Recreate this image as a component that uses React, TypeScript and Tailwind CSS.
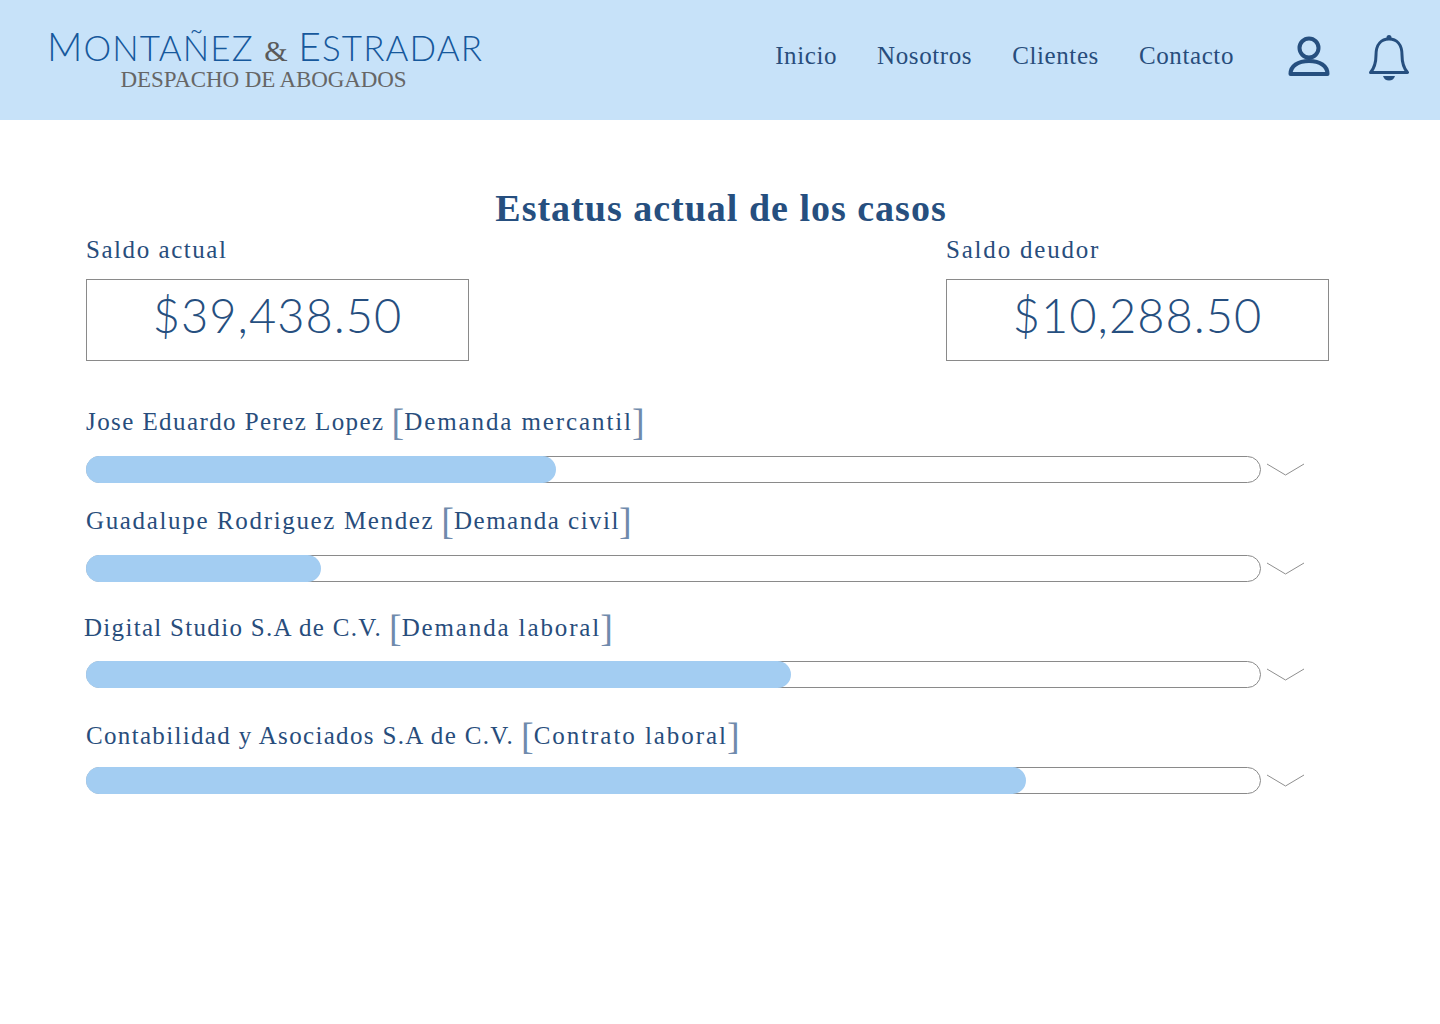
const serif = "font-['Liberation_Serif',serif]";
const rows = [
  { name: "Jose Eduardo Perez Lopez", kind: "Demanda mercantil", pct: 470, top: "mt-[43px]", gap: "mt-[16px]", ml: "", nameT: "tracking-[1.42px]", kindT: "tracking-[1.9px]" },
  { name: "Guadalupe Rodriguez Mendez", kind: "Demanda civil", pct: 235, top: "mt-[20px]", gap: "mt-[16px]", ml: "", nameT: "tracking-[1.65px]", kindT: "tracking-[1.5px]" },
  { name: "Digital Studio S.A de C.V.", kind: "Demanda laboral", pct: 705, top: "mt-[28px]", gap: "mt-[15px]", ml: "-ml-[2px]", nameT: "tracking-[1.3px]", kindT: "tracking-[1.87px]" },
  { name: "Contabilidad y Asociados S.A de C.V.", kind: "Contrato laboral", pct: 940, top: "mt-[30px]", gap: "mt-[13px]", ml: "", nameT: "tracking-[1.33px]", kindT: "tracking-[1.95px]" },
];
const saldos = [
  { label: "Saldo actual", value: "$39,438.50", t: "tracking-[1.55px]" },
  { label: "Saldo deudor", value: "$10,288.50", t: "tracking-[1.8px]" },
];

function Row({ r }: { r: (typeof rows)[number] }) {
  return (
    <div className={r.top}>
      <div className={`flex items-center h-[36px] text-[25px] text-[#284d7c] whitespace-nowrap ${r.ml}`}>
        <span className={r.nameT}>{r.name}</span>
        <span className="ml-[7px] text-[38px] leading-none text-[#6f8aac] -mt-[1px]">[</span>
        <span className={r.kindT}>{r.kind}</span>
        <span className="-ml-[1px] text-[38px] leading-none text-[#6f8aac] -mt-[1px]">]</span>
      </div>
      <div className={`flex items-center ${r.gap}`}>
        <div className="w-[1175px] h-[27px] rounded-full border border-[#8a8a8a] bg-white">
          <div className="h-[27px] -mt-px -ml-px rounded-full bg-[#a3cdf2]" style={{ width: r.pct }} />
        </div>
        <svg className="ml-[5px]" width="39" height="16" viewBox="0 0 39 16" fill="none">
          <path d="M1 2 L19.5 13 L38 2" stroke="#8f8f8f" strokeWidth="1" />
        </svg>
      </div>
    </div>
  );
}

export default function App() {
  return (
    <div className={`min-h-[1024px] bg-white ${serif}`}>
      <header className="h-[120px] bg-[#c7e2f9] flex items-center pl-[47px] pr-[30px]">
        <div className="w-[436px] -mt-[2px] flex flex-col items-center">
          <div className="font-['Lato',sans-serif] font-light text-[#16589c] text-[35px] leading-[40px] tracking-[1.1px] whitespace-nowrap">
            <span className="text-[39px]">M</span>ONTAÑEZ{" "}
            <span className={`${serif} text-[#5a5a5a] text-[30px] tracking-normal`}>&amp;</span>{" "}
            <span className="text-[39px]">E</span>STRADAR
          </div>
          <div className="text-[#666666] text-[23px] leading-[24px] -mt-[3px] -ml-[3px] tracking-[-0.1px] whitespace-nowrap">DESPACHO DE ABOGADOS</div>
        </div>
        <nav className="ml-auto flex items-center gap-[40px] text-[25px] tracking-[0.6px] text-[#284d7c] -mt-[8px] mr-[54px]">
          <span>Inicio</span>
          <span>Nosotros</span>
          <span>Clientes</span>
          <span>Contacto</span>
        </nav>
        <svg className="-mt-[7px]" width="42" height="44" viewBox="0 0 42 44" fill="none" stroke="#264f7f" strokeWidth="4">
          <circle cx="21" cy="13" r="9.5" />
          <path d="M2.5 39 C2.5 31 10 26 21 26 C32 26 39.5 31 39.5 39 Z" strokeLinejoin="round" />
        </svg>
        <svg className="ml-[39px] -mt-[7px] mr-[1px]" width="40" height="48" viewBox="0 0 40 48" fill="none" stroke="#264f7f">
          <path d="M1.5 39.5 C5.5 35 7 30 7 22 C7 11 12.5 6 20 6 C27.5 6 33 11 33 22 C33 30 34.5 35 38.5 39.5 Z" strokeWidth="3" strokeLinejoin="round" />
          <circle cx="20" cy="4.5" r="2.5" fill="#264f7f" stroke="none" />
          <path d="M14 43 H26 C25 46 23 47.5 20 47.5 C17 47.5 15 46 14 43 Z" fill="#264f7f" stroke="none" />
        </svg>
      </header>
      <main className="pl-[86px] pr-[111px]">
        <h1 className="text-center font-bold text-[38px] leading-[44px] tracking-[1px] text-[#264f7f] mt-[66px] ml-[27px]">Estatus actual de los casos</h1>
        <div className="flex justify-between mt-[4px]">
          {saldos.map((s) => (
            <div key={s.label} className="w-[383px]">
              <div className={`text-[25px] leading-[32px] text-[#284d7c] ${s.t}`}>{s.label}</div>
              <div className="mt-[13px] h-[82px] border border-[#8a8a8a] flex items-center justify-center text-[47px] tracking-[1px] text-[#264f7f] font-['Lato',sans-serif] font-light pb-[10px]">{s.value}</div>
            </div>
          ))}
        </div>
        {rows.map((r) => (
          <Row key={r.name} r={r} />
        ))}
      </main>
    </div>
  );
}
